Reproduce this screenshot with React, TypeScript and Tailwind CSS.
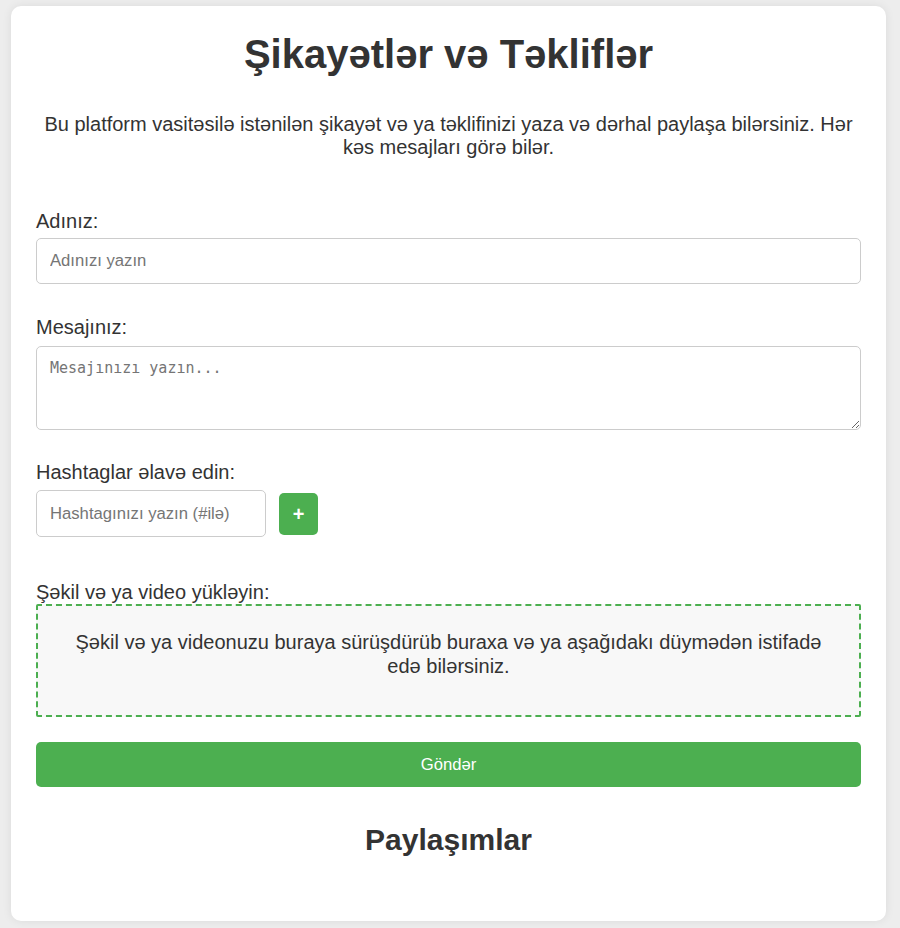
import React, { useState } from "react";

// Şikayət / təklif formu – tək kart, mərkəzdə
export default function App() {
  const [name, setName] = useState("");
  const [message, setMessage] = useState("");
  const [tag, setTag] = useState("");

  return (
    <div className="min-h-screen bg-[#ededed] pt-[6px] pb-[7px] font-['Liberation_Sans',Arial,sans-serif] text-[#333]">
      <div className="ml-[11px] w-[875px] rounded-[10px] bg-white px-[25px] pt-[25px] pb-[64px] shadow-[0_0_10px_rgba(0,0,0,0.08)]">
        {/* Başlıq */}
        <h1 className="text-center text-[40px] font-bold leading-[46px]">
          Şikayətlər və Təkliflər
        </h1>
        <p className="mt-[36px] text-center text-[20px] leading-[23px]">
          Bu platform vasitəsilə istənilən şikayət və ya təklifinizi yaza və
          dərhal paylaşa bilərsiniz. Hər kəs mesajları görə bilər.
        </p>

        {/* Ad */}
        <label className="mt-[51px] block text-[20px] leading-[23px]">Adınız:</label>
        <input
          value={name}
          onChange={(e) => setName(e.target.value)}
          placeholder="Adınızı yazın"
          className="mt-[5px] block h-[46px] w-full rounded-[5px] border border-[#ccc] px-[13px] text-[16.67px] outline-none placeholder:text-[#757575]"
        />

        {/* Mesaj */}
        <label className="mt-[32px] block text-[20px] leading-[23px]">Mesajınız:</label>
        <textarea
          value={message}
          onChange={(e) => setMessage(e.target.value)}
          placeholder="Mesajınızı yazın..."
          className="mt-[7px] block h-[84px] w-full rounded-[5px] border border-[#ccc] px-[13px] py-[12px] font-['DejaVu_Sans_Mono',monospace] text-[15px] leading-[18px] outline-none placeholder:text-[#757575]"
        />

        {/* Hashtaglar */}
        <label className="mt-[31px] block text-[20px] leading-[23px]">
          Hashtaglar əlavə edin:
        </label>
        <div className="mt-[6px] flex items-center gap-[13px]">
          <input
            value={tag}
            onChange={(e) => setTag(e.target.value)}
            placeholder="Hashtagınızı yazın (#ilə)"
            className="h-[47px] w-[230px] rounded-[5px] border border-[#ccc] px-[13px] text-[16.67px] outline-none placeholder:text-[#757575]"
          />
          <button className="flex h-[42px] w-[39px] items-center justify-center rounded-[5px] bg-[#4caf50] text-[20px] font-bold text-white">
            +
          </button>
        </div>

        {/* Fayl yükləmə */}
        <label className="mt-[44px] block text-[20px] leading-[23px]">
          Şəkil və ya video yükləyin:
        </label>
        <div className="h-[113px] rounded-[2px] border-2 border-dashed border-[#4caf50] bg-[#f8f8f8] px-[20px] pt-[24px] text-center text-[20px] leading-[24px]">
          Şəkil və ya videonuzu buraya sürüşdürüb buraxa və ya aşağıdakı düymədən
          istifadə edə bilərsiniz.
        </div>

        <button className="mt-[25px] h-[45px] w-full rounded-[5px] bg-[#4caf50] text-[16.67px] text-white">
          Göndər
        </button>

        <h2 className="mt-[36px] text-center text-[30px] font-bold leading-[34px]">
          Paylaşımlar
        </h2>
      </div>
    </div>
  );
}
